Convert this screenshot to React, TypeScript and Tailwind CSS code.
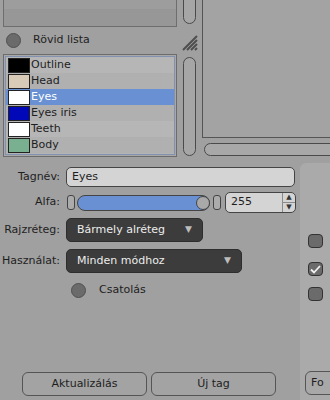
import React from "react";

type TTag = {
  name: string;
  color: string;
};

const Tags: TTag[] = [
  { name: "Outline", color: "#000000" },
  { name: "Head", color: "#d8ccb8" },
  { name: "Eyes", color: "#ffffff" },
  { name: "Eyes iris", color: "#0008b8" },
  { name: "Teeth", color: "#ffffff" },
  { name: "Body", color: "#78b090" },
];

const Radio = ({ checked = false }: { checked?: boolean }) => (
  <div className="w-[15px] h-[15px] rounded-full bg-[#6b6b6b] border border-[#505050]" />
);

const Grip = () => (
  <svg width="16" height="16" viewBox="0 0 16 16">
    <path d="M1 15 L15 1 M5 15 L15 5 M9 15 L15 9 M13 15 L15 13" stroke="#4e4e4e" strokeWidth="2" />
  </svg>
);

const Dropdown = ({ label, width }: { label: string; width: string }) => (
  <div
    className={`${width} h-[24px] rounded-[5px] bg-[#3c3c3c] border border-[#2e2e2e] flex items-center justify-between pl-[10px] pr-[10px] text-[11px] text-[#ececec]`}
  >
    <span>{label}</span>
    <span className="text-[9px] text-[#bdbdbd]">▼</span>
  </div>
);

const Label = ({ children }: { children: React.ReactNode }) => (
  <div className="w-[62px] shrink-0 text-right pr-[2px] text-[11px] text-[#1e1e1e]">{children}</div>
);

export default function App() {
  return (
    <div
      className="w-[330px] h-[400px] overflow-hidden bg-[#a0a0a0] text-[#1e1e1e] flex flex-col select-none"
      style={{ fontFamily: '"DejaVu Sans", Verdana, sans-serif' }}
    >
      {/* top area */}
      <div className="flex h-[160px] shrink-0">
        <div className="w-[177px] pl-[3px] flex flex-col shrink-0">
          <div className="h-[27px] border-x border-b border-[#6e6e6e] flex flex-col">
            <div className="h-[9px] bg-[#9d9d9d]" />
            <div className="flex-1 bg-[#979797]" />
          </div>
          <div className="flex items-center h-[15px] mt-[6px] pl-[3px] gap-[12px]">
            <Radio />
            <span className="text-[11px]">Rövid lista</span>
          </div>
          <div className="mt-[6px] h-[103px] border border-[#6c6c6c] bg-[#a8a8a8] p-px">
            <div className="h-full border border-[#8291b0] bg-[#b3b3b3] flex flex-col">
              {Tags.map((tag, i) => (
                <div
                  key={tag.name}
                  className={`h-[16px] flex items-center pl-[2px] text-[11px] ${
                    tag.name === "Eyes" ? "bg-[#6890d2] text-white" : i % 2 === 0 ? "bg-[#b6b6b6]" : "bg-[#b0b0b0]"
                  }`}
                >
                  <div
                    className="w-[22px] h-[15px] border border-[#222] shrink-0"
                    style={{ backgroundColor: tag.color }}
                  />
                  <span className="ml-[1px]">{tag.name}</span>
                </div>
              ))}
            </div>
          </div>
        </div>

        <div className="w-[25px] shrink-0 flex flex-col items-start pl-[6px]">
          <div className="w-[13px] h-[30px] -mt-[6px] rounded-b-full border border-[#4a4a4a] bg-[#a6a6a6]" />
          <div className="mt-[11px] -ml-[1px]">
            <Grip />
          </div>
          <div className="mt-[6px] w-[13px] h-[99px] rounded-full border border-[#4a4a4a] bg-[#a6a6a6]" />
        </div>

        <div className="flex-1 flex flex-col">
          <div className="h-[138px] border-l border-b border-[#555] bg-[#a3a3a3]" />
          <div className="mt-[5px] ml-[2px] h-[13px] w-[140px] rounded-l-full border border-[#4a4a4a] bg-[#a8a8a8]" />
        </div>
      </div>

      {/* bottom area */}
      <div className="flex flex-1">
        <div className="w-[300px] shrink-0 flex flex-col pt-[7px]">
          <div className="flex items-center h-[20px]">
            <Label>Tagnév:</Label>
            <div className="ml-[4px] w-[229px] h-[20px] rounded-[5px] border border-[#444] bg-[#d4d4d4] flex items-center pl-[5px] text-[11px]">
              Eyes
            </div>
          </div>

          <div className="flex items-center h-[21px] mt-[5px]">
            <Label>Alfa:</Label>
            <div className="ml-[5px] w-[8px] h-[15px] rounded-[3px] border border-[#444] bg-[#ababab]" />
            <div className="ml-[2px] w-[133px] h-[16px] rounded-full border border-[#444] bg-[#6890d2] flex justify-end">
              <div className="w-[14px] h-[14px] rounded-full border border-[#444] bg-[#a9a9a9] -mr-px" />
            </div>
            <div className="ml-[3px] w-[8px] h-[15px] rounded-[3px] border border-[#444] bg-[#ababab]" />
            <div className="ml-[4px] w-[71px] h-[21px] rounded-[5px] border border-[#444] bg-[#d4d4d4] flex">
              <div className="flex-1 flex items-center pl-[5px] text-[11px]">255</div>
              <div className="w-[13px] border-l border-[#8a8a8a] flex flex-col text-[7px] text-[#333] leading-none">
                <div className="flex-1 flex items-center justify-center border-b border-[#8a8a8a]">▲</div>
                <div className="flex-1 flex items-center justify-center">▼</div>
              </div>
            </div>
          </div>

          <div className="flex items-center h-[24px] mt-[5px]">
            <Label>Rajzréteg:</Label>
            <div className="ml-[4px]">
              <Dropdown label="Bármely alréteg" width="w-[137px]" />
            </div>
          </div>

          <div className="flex items-center h-[24px] mt-[7px]">
            <Label>Használat:</Label>
            <div className="ml-[4px]">
              <Dropdown label="Minden módhoz" width="w-[176px]" />
            </div>
          </div>

          <div className="flex items-center h-[15px] mt-[10px] pl-[71px] gap-[13px]">
            <Radio />
            <span className="text-[11px]">Csatolás</span>
          </div>

          <div className="flex gap-[4px] mt-auto mb-[4px] pl-[22px]">
            <div className="w-[125px] h-[24px] rounded-[6px] border border-[#555] bg-[#a3a3a3] flex items-center justify-center text-[11px]">
              Aktualizálás
            </div>
            <div className="w-[125px] h-[24px] rounded-[6px] border border-[#555] bg-[#a3a3a3] flex items-center justify-center text-[11px]">
              Új tag
            </div>
          </div>
        </div>

        <div className="flex-1 mt-[3px] rounded-tl-[6px] bg-[#aaaaaa] flex flex-col pl-[8px]">
          <div className="mt-[71px] w-[15px] h-[14px] rounded-[4px] border border-[#333] bg-[#6b6b6b]" />
          <div className="mt-[14px] w-[15px] h-[14px] rounded-[4px] border border-[#333] bg-[#6b6b6b] flex items-center justify-center">
            <svg width="11" height="9" viewBox="0 0 11 9">
              <path d="M1 4.5 L4 7.5 L10 1" stroke="#f2f2f2" strokeWidth="1.8" fill="none" />
            </svg>
          </div>
          <div className="mt-[11px] w-[15px] h-[14px] rounded-[4px] border border-[#333] bg-[#6b6b6b]" />
          <div className="mt-auto mb-[5px] -ml-[3px] w-[40px] h-[24px] rounded-[6px] border border-[#555] bg-[#a8a8a8] flex items-center pl-[5px] text-[11px]">
            Fo
          </div>
        </div>
      </div>
    </div>
  );
}
